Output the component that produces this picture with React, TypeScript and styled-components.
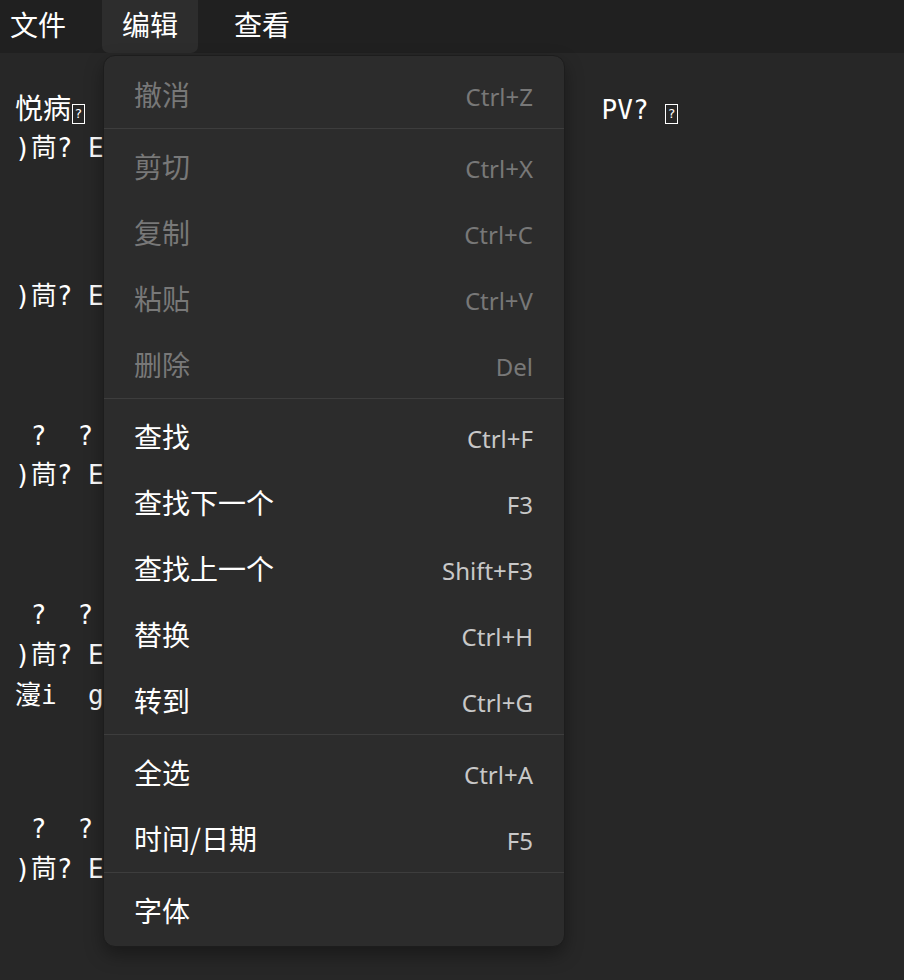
import React from "react";
import styled, { createGlobalStyle } from "styled-components";

const GlobalStyle = createGlobalStyle`
  html, body {
    margin: 0;
    padding: 0;
    background: #272727;
  }
  * {
    box-sizing: border-box;
  }
`;

type Item = { label: string; shortcut?: string; disabled?: boolean };

const editGroups: Item[][] = [
  [{ label: "撤消", shortcut: "Ctrl+Z", disabled: true }],
  [
    { label: "剪切", shortcut: "Ctrl+X", disabled: true },
    { label: "复制", shortcut: "Ctrl+C", disabled: true },
    { label: "粘贴", shortcut: "Ctrl+V", disabled: true },
    { label: "删除", shortcut: "Del", disabled: true },
  ],
  [
    { label: "查找", shortcut: "Ctrl+F" },
    { label: "查找下一个", shortcut: "F3" },
    { label: "查找上一个", shortcut: "Shift+F3" },
    { label: "替换", shortcut: "Ctrl+H" },
    { label: "转到", shortcut: "Ctrl+G" },
  ],
  [
    { label: "全选", shortcut: "Ctrl+A" },
    { label: "时间/日期", shortcut: "F5" },
  ],
  [{ label: "字体" }],
];

const menus = ["文件", "编辑", "查看"];

const App = () => {
  const lines: { content: React.ReactNode; gap: number }[] = [
    {
      content: (
        <>
          <Big>悦病</Big>
          <Tofu>?</Tofu>
          {" ".repeat(33)}PV? <Tofu>?</Tofu>
        </>
      ),
      gap: 0,
    },
    { content: ")茼? E", gap: 2 },
    { content: ")茼? E", gap: 109 },
    { content: " ?  ?", gap: 101 },
    { content: ")茼? E", gap: 0 },
    { content: " ?  ?", gap: 101 },
    { content: ")茼? E", gap: 1 },
    { content: "濅i  g", gap: 1 },
    { content: " ?  ?", gap: 95 },
    { content: ")茼? E", gap: 1 },
  ];

  return (
    <>
      <GlobalStyle />
      <Window>
        <MenuBar>
          {menus.map((m) => (
            <MenuButton key={m} $active={m === "编辑"}>
              {m}
            </MenuButton>
          ))}
        </MenuBar>

        <Editor>
          {lines.map((l, i) => (
            <Line key={i} $gap={l.gap}>
              {l.content}
            </Line>
          ))}
        </Editor>

        <DropMenu>
          {editGroups.map((group, gi) => (
            <React.Fragment key={gi}>
              {gi > 0 && <Separator />}
              {group.map((item) => (
                <MenuItem key={item.label} $disabled={item.disabled}>
                  <ItemLabel>{item.label}</ItemLabel>
                  {item.shortcut && <Shortcut>{item.shortcut}</Shortcut>}
                </MenuItem>
              ))}
            </React.Fragment>
          ))}
        </DropMenu>
      </Window>
    </>
  );
};

const Window = styled.div`
  position: relative;
  width: 904px;
  height: 980px;
  overflow: hidden;
  background: #272727;
  display: flex;
  flex-direction: column;
`;

const MenuBar = styled.div`
  display: flex;
  gap: 16px;
  height: 53px;
  background: #202020;
  flex-shrink: 0;
`;

const MenuButton = styled.div<{ $active?: boolean }>`
  display: flex;
  align-items: center;
  height: 53px;
  padding: 0 20px 5px;
  border-radius: 0 0 7px 7px;
  font-family: "Noto Sans CJK SC", "Noto Sans", sans-serif;
  font-size: 28px;
  color: #ffffff;
  background: ${({ $active }) => ($active ? "#2d2d2d" : "transparent")};

  &:first-child {
    margin-left: -10px;
  }
`;

const Editor = styled.div`
  flex: 1;
  padding: 35px 15px;
  font-family: "DejaVu Sans Mono", "Noto Sans CJK SC", monospace;
  font-size: 26px;
  line-height: 39px;
  color: #ffffff;
`;

const Line = styled.div<{ $gap: number }>`
  white-space: pre;
  height: 39px;
  margin-top: ${({ $gap }) => $gap}px;
`;

const Big = styled.span`
  font-family: "Noto Sans CJK SC", sans-serif;
  font-size: 28px;
`;

const Tofu = styled.span`
  display: inline-block;
  width: 13px;
  height: 20px;
  margin: 0 0 0 1px;
  border: 1.5px solid #ffffff;
  font-family: "DejaVu Sans", sans-serif;
  font-size: 13px;
  line-height: 17px;
  text-align: center;
  vertical-align: 1px;
`;

const DropMenu = styled.div`
  position: absolute;
  top: 55px;
  left: 103px;
  width: 462px;
  padding: 4px 0 4px;
  background: #2c2c2c;
  border: 1px solid #1d1d1d;
  border-radius: 12px;
  box-shadow: 0 8px 18px rgba(0, 0, 0, 0.35);
  display: flex;
  flex-direction: column;
`;

const MenuItem = styled.div<{ $disabled?: boolean }>`
  display: flex;
  align-items: center;
  justify-content: space-between;
  height: 66px;
  padding: 0 31px 0 30px;
  color: ${({ $disabled }) => ($disabled ? "#787878" : "#ffffff")};

  & > span:last-child:not(:first-child) {
    color: ${({ $disabled }) => ($disabled ? "#787878" : "#c8c8c8")};
  }
`;

const ItemLabel = styled.span`
  font-family: "Noto Sans CJK SC", "Noto Sans", sans-serif;
  font-size: 28px;
  line-height: 1;
  margin-top: 1px;
`;

const Shortcut = styled.span`
  font-family: "Noto Sans", "Open Sans", sans-serif;
  font-size: 24px;
  line-height: 1;
  margin-top: 7px;
`;

const Separator = styled.div`
  height: 1px;
  margin: 2px 0 3px;
  background: #3d3d3d;
`;

export default App;
